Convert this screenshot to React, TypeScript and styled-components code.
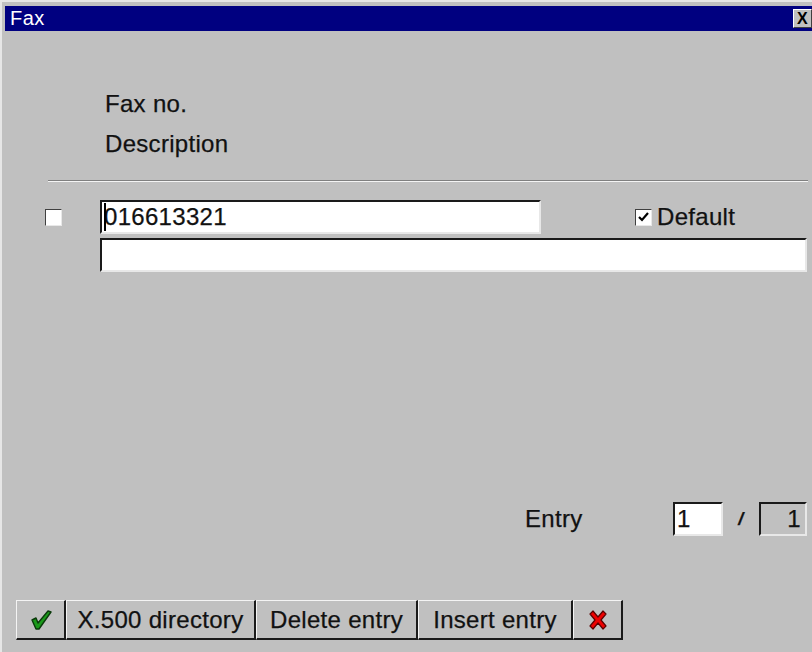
import styled, { createGlobalStyle } from "styled-components";

const GlobalStyle = createGlobalStyle`
  html, body {
    margin: 0;
    padding: 0;
    background: #c0c0c0;
  }
  body {
    font-family: "Liberation Sans", Arial, sans-serif;
  }
`;

const Frame = styled.div`
  width: 812px;
  height: 652px;
  box-sizing: border-box;
  background: #c0c0c0;
  border-top: 2px solid #e6e6e6;
  border-left: 2px solid #e6e6e6;
  padding: 4px 0 12px 3px;
  display: flex;
  flex-direction: column;
  color: #111;
  font-size: 24px;
  letter-spacing: 0.3px;
  -webkit-text-stroke: 0.25px #111;
  overflow: hidden;
`;

const TitleBar = styled.div`
  height: 25px;
  background: #000080;
  color: #fff;
  -webkit-text-stroke: 0;
  letter-spacing: 0.5px;
  display: flex;
  align-items: center;
  justify-content: space-between;
  padding-left: 5px;
  font-size: 20px;
`;

const CloseBox = styled.div`
  width: 19px;
  height: 19px;
  box-sizing: border-box;
  background: #c0c0c0;
  border-top: 1px solid #fff;
  border-left: 1px solid #fff;
  border-right: 1px solid #404040;
  border-bottom: 1px solid #404040;
  color: #000;
  font-size: 16px;
  font-weight: bold;
  display: flex;
  align-items: center;
  justify-content: center;
  line-height: 1;
`;

const Labels = styled.div`
  margin-top: 53px;
  padding-left: 100px;
  line-height: 40px;
`;

const Separator = styled.div`
  margin: 16px 4px 0 43px;
  border-top: 1px solid #808080;
  border-bottom: 1px solid #f4f4f4;
`;

const FieldRow = styled.div<{ $gap: number }>`
  display: flex;
  align-items: center;
  margin-top: ${({ $gap }) => $gap}px;
  padding-left: 40px;
`;

const Check = styled.div<{ $size: number }>`
  width: ${({ $size }) => $size}px;
  height: ${({ $size }) => $size}px;
  box-sizing: border-box;
  background: #fff;
  border-top: 1px solid #404040;
  border-left: 1px solid #404040;
  border-right: 1px solid #e8e8e8;
  border-bottom: 1px solid #e8e8e8;
  display: flex;
  align-items: center;
  justify-content: center;
  flex-shrink: 0;
`;

const CheckSlot = styled.div`
  width: 55px;
  display: flex;
`;

const Field = styled.div<{ $width: number; $grey?: boolean; $right?: boolean }>`
  position: relative;
  width: ${({ $width }) => $width}px;
  height: 34px;
  box-sizing: border-box;
  background: ${({ $grey }) => ($grey ? "#c0c0c0" : "#fff")};
  border-top: 2px solid #1a1a1a;
  border-left: 2px solid #1a1a1a;
  border-right: 2px solid #e8e8e8;
  border-bottom: 2px solid #e8e8e8;
  display: flex;
  align-items: center;
  justify-content: ${({ $right }) => ($right ? "flex-end" : "flex-start")};
  padding: 0 4px 0 2px;
  flex-shrink: 0;
`;

const Caret = styled.span`
  position: absolute;
  left: 2px;
  top: 1px;
  width: 2px;
  height: 28px;
  background: #000;
`;

const DefaultBox = styled.label`
  display: flex;
  align-items: center;
  gap: 5px;
  margin-left: 94px;
`;

const Spacer = styled.div`
  flex: 1;
`;

const EntryRow = styled.div`
  display: flex;
  align-items: center;
  margin-bottom: 64px;
  padding-left: 520px;
`;

const EntryLabel = styled.span`
  width: 148px;
`;

const Slash = styled.span`
  width: 36px;
  text-align: center;
  font-style: italic;
  font-weight: bold;
  font-size: 18px;
`;

const ButtonBar = styled.div`
  display: flex;
  height: 40px;
  margin-left: 11px;
`;

const Button = styled.div<{ $width: number }>`
  width: ${({ $width }) => $width}px;
  box-sizing: border-box;
  background: #c0c0c0;
  border-top: 1px solid #f4f4f4;
  border-left: 1px solid #f4f4f4;
  border-right: 2px solid #1a1a1a;
  border-bottom: 2px solid #1a1a1a;
  display: flex;
  align-items: center;
  justify-content: center;
  white-space: nowrap;
`;

function CheckMark() {
  return (
    <svg width="11" height="10" viewBox="0 0 11 10">
      <path d="M1 5 L4 8 L10 1" stroke="#000" strokeWidth="2.2" fill="none" />
    </svg>
  );
}

function OkIcon() {
  return (
    <svg width="24" height="22" viewBox="0 0 24 22">
      <path
        d="M3 11 L7 9 L9 14 L19 2 L22 3 L10 20 L7 20 Z"
        fill="#1a9a1a"
        stroke="#0a3a0a"
        strokeWidth="1.4"
        strokeLinejoin="round"
      />
    </svg>
  );
}

function CancelIcon() {
  return (
    <svg width="22" height="22" viewBox="0 0 22 22">
      <path
        d="M3 5 L6 2 L11 8 L16 2 L19 5 L14 11 L19 17 L16 20 L11 14 L6 20 L3 17 L8 11 Z"
        fill="#ee0000"
        stroke="#5a0000"
        strokeWidth="1.2"
        strokeLinejoin="round"
      />
    </svg>
  );
}

export default function App() {
  return (
    <>
      <GlobalStyle />
      <Frame>
        <TitleBar>
          <span>Fax</span>
          <CloseBox>X</CloseBox>
        </TitleBar>

        <Labels>
          <div>Fax no.</div>
          <div>Description</div>
        </Labels>
        <Separator />

        <FieldRow $gap={18}>
          <CheckSlot>
            <Check $size={17} />
          </CheckSlot>
          <Field $width={441}>
            <Caret />
            016613321
          </Field>
          <DefaultBox>
            <Check $size={17}>
              <CheckMark />
            </Check>
            Default
          </DefaultBox>
        </FieldRow>
        <FieldRow $gap={4}>
          <CheckSlot />
          <Field $width={707} />
        </FieldRow>

        <Spacer />

        <EntryRow>
          <EntryLabel>Entry</EntryLabel>
          <Field $width={50}>1</Field>
          <Slash>/</Slash>
          <Field $width={48} $grey $right>
            1
          </Field>
        </EntryRow>

        <ButtonBar>
          <Button $width={50}>
            <OkIcon />
          </Button>
          <Button $width={190}>X.500 directory</Button>
          <Button $width={162}>Delete entry</Button>
          <Button $width={155}>Insert entry</Button>
          <Button $width={50}>
            <CancelIcon />
          </Button>
        </ButtonBar>
      </Frame>
    </>
  );
}
